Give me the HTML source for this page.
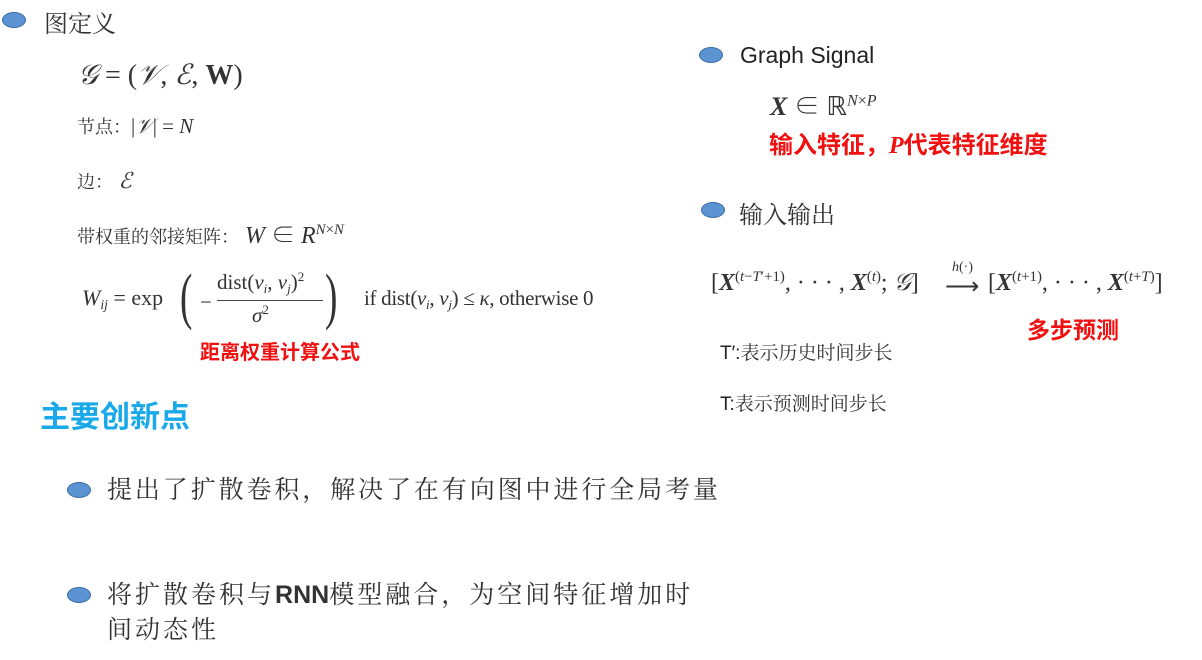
<!DOCTYPE html>
<html><head><meta charset="utf-8"><style>
body{margin:0;width:1202px;height:660px;background:#fff;position:relative;overflow:hidden;font-family:"Liberation Sans","Noto Sans CJK SC",sans-serif;color:#222}
.a{position:absolute;white-space:nowrap}
.b{position:absolute;width:22px;height:14px;border-radius:50%;background:#5b93d3;border:1.5px solid #3a6aa3}
.m{font-family:"Liberation Serif","Noto Serif CJK SC",serif;color:#333}
.s{font-family:"Noto Serif CJK SC",serif;color:#333}
i{font-style:italic}
sup{font-size:62%;vertical-align:0.6em;line-height:0}
sub{font-size:62%;vertical-align:-0.3em;line-height:0}
.red{color:#f01010;font-weight:bold;font-family:"Noto Sans CJK SC",sans-serif}
</style></head><body>
<div class="b" style="left:2px;top:12px"></div>
<div class="a s" style="left:44px;top:4px;font-size:24px">图定义</div>
<div class="a m" style="left:78px;top:58px;font-size:28px"><i>𝒢</i> = (<i>𝒱</i>, <i>ℰ</i>, <b>W</b>)</div>
<div class="a s" style="left:77px;top:113px;font-size:18px">节点：<span class="m" style="font-size:21px">|<i>𝒱</i>| = <i>N</i></span></div>
<div class="a s" style="left:77px;top:168px;font-size:18px">边：<span class="m" style="font-size:22px"> <i>ℰ</i></span></div>
<div class="a s" style="left:77px;top:215px;font-size:18px">带权重的邻接矩阵：<span class="m" style="font-size:24px"> <i>W</i> ∈ <i>R</i><sup><i>N</i>×<i>N</i></sup></span></div>
<div class="a m" style="left:82px;top:285px;font-size:22px"><i>W</i><sub><i>ij</i></sub> = exp</div>
<div class="a m" style="left:180px;top:262px;font-size:62px;font-weight:100;transform:scaleX(0.6);transform-origin:left">(</div>
<div class="a m" style="left:200px;top:290px;font-size:21px">−</div>
<div class="a m" style="left:217px;top:270px;font-size:21px">dist(<i>v</i><sub><i>i</i></sub>, <i>v</i><sub><i>j</i></sub>)<sup>2</sup></div>
<div style="position:absolute;left:217px;top:300px;width:106px;height:1px;background:#444"></div>
<div class="a m" style="left:252px;top:303px;font-size:21px"><i>σ</i><sup>2</sup></div>
<div class="a m" style="left:325px;top:262px;font-size:62px;transform:scaleX(0.6);transform-origin:left">)</div>
<div class="a m" style="left:364px;top:286px;font-size:21px;letter-spacing:-0.3px">if dist(<i>v</i><sub><i>i</i></sub>, <i>v</i><sub><i>j</i></sub>) ≤ <i>κ</i>, otherwise 0</div>
<div class="a red" style="left:200px;top:336px;font-size:20px">距离权重计算公式</div>
<div class="a" style="left:40px;top:392px;font-size:30px;font-weight:bold;color:#1aa9e8;font-family:'Noto Sans CJK SC',sans-serif">主要创新点</div>
<div class="b" style="left:67px;top:482px"></div>
<div class="a s" style="left:107px;top:470px;font-size:25px;letter-spacing:2.9px">提出了扩散卷积，解决了在有向图中进行全局考量</div>
<div class="b" style="left:67px;top:587px"></div>
<div class="a s" style="left:107px;top:575px;font-size:25px;letter-spacing:3.0px">将扩散卷积与<b style="font-family:'Liberation Sans',sans-serif;letter-spacing:0">RNN</b>模型融合，为空间特征增加时</div>
<div class="a s" style="left:107px;top:610px;font-size:25px;letter-spacing:3.0px">间动态性</div>

<div class="b" style="left:699px;top:47px"></div>
<div class="a" style="left:740px;top:42px;font-size:23px;color:#222">Graph Signal</div>
<div class="a m" style="left:770px;top:86px;font-size:26px"><b><i>X</i></b> ∈ ℝ<sup><i>N</i>×<i>P</i></sup></div>
<div class="a red" style="left:769px;top:125px;font-size:24px">输入特征，<i style="font-family:'Liberation Serif',serif">P</i>代表特征维度</div>
<div class="b" style="left:701px;top:202px"></div>
<div class="a s" style="left:739px;top:195px;font-size:24px">输入输出</div>
<div class="a m" style="left:711px;top:270px;font-size:24px">[<b><i>X</i></b><sup>(<i>t</i>−<i>T</i>′+1)</sup>, · · · , <b><i>X</i></b><sup>(<i>t</i>)</sup>; <i>𝒢</i>]</div>
<div class="a m" style="left:952px;top:260px;font-size:14px"><i>h</i>(·)</div>
<div class="a m" style="left:945px;top:272px;font-size:24px">⟶</div>
<div class="a m" style="left:988px;top:270px;font-size:24px">[<b><i>X</i></b><sup>(<i>t</i>+1)</sup>, · · · , <b><i>X</i></b><sup>(<i>t</i>+<i>T</i>)</sup>]</div>
<div class="a red" style="left:1027px;top:311px;font-size:23px">多步预测</div>
<div class="a" style="left:720px;top:338px;font-size:19px">T′:<span class="s">表示历史时间步长</span></div>
<div class="a" style="left:720px;top:389px;font-size:19px">T:<span class="s">表示预测时间步长</span></div>
</body></html>
